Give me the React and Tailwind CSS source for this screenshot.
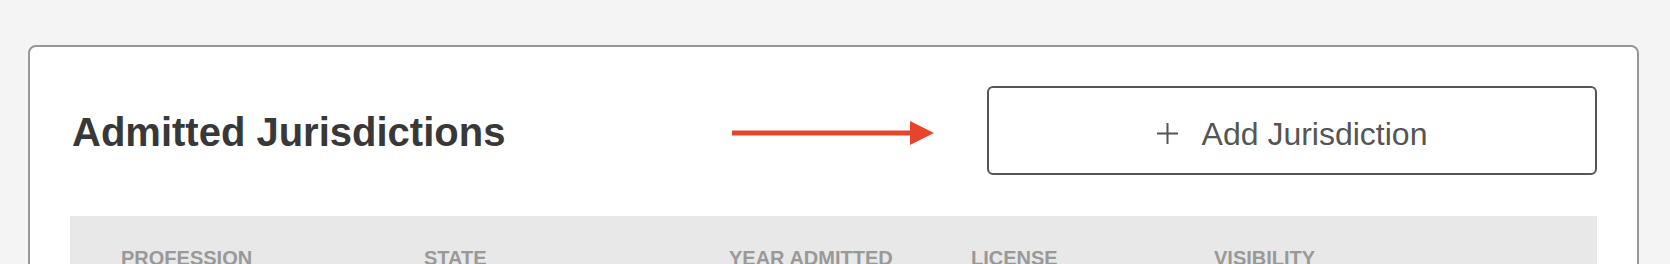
import React from 'react';

const columns = ['Profession', 'State', 'Year Admitted', 'License', 'Visibility'];

const App = () => {
  return (
    <div className="min-h-screen bg-[#f4f4f4] pt-[45px] pl-[28px] pr-[31px] font-['Liberation_Sans',Arial,sans-serif]">
      <div className="bg-white border-2 border-[#979797] rounded-lg px-[40px] pt-[39px] pb-10 min-h-[400px]">
        {/* Header */}
        <div className="flex items-center justify-between">
          <h2 className="text-[40px] leading-none font-bold text-[#383838] pl-[2px] pt-[2px]">Admitted Jurisdictions</h2>
          <div className="flex items-center gap-[53px]">
            <svg width="202" height="24" viewBox="0 0 202 24" className="block mt-[4px]">
              <line x1="0" y1="12" x2="182" y2="12" stroke="#e8432b" strokeWidth="5" />
              <polygon points="178,0 202,12 178,24" fill="#e8432b" />
            </svg>
            <button className="flex items-center justify-center gap-[24px] w-[610px] h-[89px] pt-[6px] border-2 border-[#555555] rounded-md bg-white text-[#555555] text-[32px] leading-none">
              <svg width="21" height="21" viewBox="0 0 21 21" className="block">
                <path d="M10.5 0v21M0 10.5h21" stroke="#555555" strokeWidth="2" />
              </svg>
              <span>Add Jurisdiction</span>
            </button>
          </div>
        </div>

        {/* Table head */}
        <div className="mt-[41px] bg-[#e8e8e8] pl-[51px] pt-[32px] pb-6 grid grid-cols-[303px_305px_242px_243px_1fr]">
          {columns.map((c) => (
            <div key={c} className="text-[20px] leading-none font-bold uppercase text-[#999999]">
              {c}
            </div>
          ))}
        </div>
      </div>
    </div>
  );
};

export default App;
